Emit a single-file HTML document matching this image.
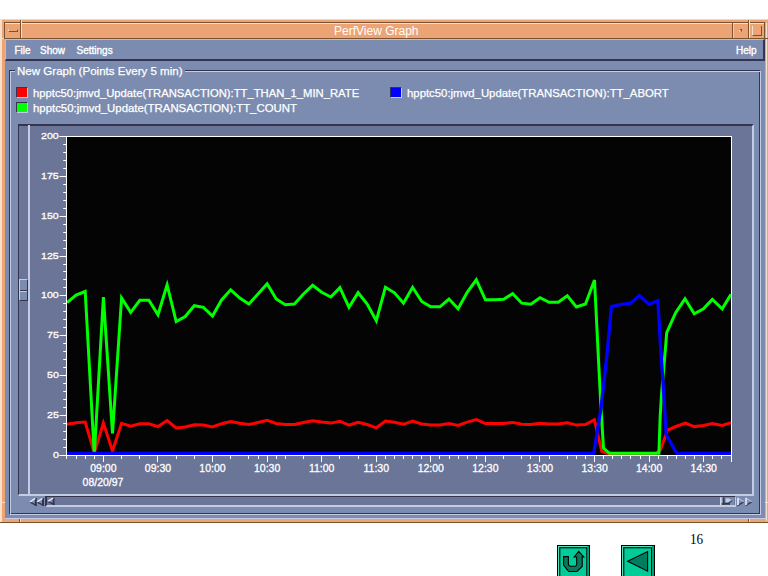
<!DOCTYPE html>
<html><head><meta charset="utf-8"><title>PerfView Graph</title>
<style>
html,body{margin:0;padding:0;background:#fff;}
body{width:768px;height:576px;position:relative;overflow:hidden;font-family:"Liberation Sans",sans-serif;}
.abs{position:absolute;}
#win{left:0;top:19px;width:768px;height:504px;background:#ECA474;}
.lt{background:#F9E0CC;}
.dk{background:#7A5230;}
#client{left:5px;top:39px;width:760px;height:480px;background:#7B8CB0;}
#menubar{left:5px;top:39px;width:760px;height:22px;background:#7B8CB0;box-sizing:border-box;border-top:1px solid #B4C0DC;border-left:1px solid #B4C0DC;border-right:2px solid #34344E;border-bottom:2px solid #34344E;}
.menu{color:#fff;font-size:10px;top:44.6px;line-height:11px;-webkit-text-stroke:0.35px #fff;white-space:nowrap;}
.leg{color:#fff;font-size:11.35px;line-height:12px;white-space:nowrap;-webkit-text-stroke:0.25px #fff;}
.sw{width:10px;height:9px;border-top:1px solid #34344E;border-left:1px solid #34344E;border-bottom:1px solid #C4CCE4;border-right:1px solid #C4CCE4;}
svg text{font-family:"Liberation Sans",sans-serif;}
</style></head><body>
<!-- window frame -->
<div id="win" class="abs"></div>
<div class="abs lt" style="left:0;top:19px;width:768px;height:1px;opacity:.8"></div>
<div class="abs lt" style="left:0;top:19px;width:2px;height:503px"></div>
<div class="abs dk" style="left:0;top:522px;width:768px;height:1px"></div>
<!-- title bar lines -->
<div class="abs dk" style="left:4px;top:22px;width:761px;height:1px"></div>
<div class="abs lt" style="left:5px;top:23px;width:760px;height:1px"></div>
<div class="abs dk" style="left:4px;top:22px;width:1px;height:17px"></div>
<div class="abs dk" style="left:4px;top:38px;width:761px;height:1px"></div>
<div class="abs dk" style="left:20px;top:20px;width:1px;height:19px"></div>
<div class="abs lt" style="left:21px;top:20px;width:1px;height:18px"></div>
<div class="abs dk" style="left:732px;top:23px;width:1px;height:16px"></div>
<div class="abs lt" style="left:733px;top:24px;width:1px;height:14px;opacity:.6"></div>
<div class="abs dk" style="left:748px;top:20px;width:1px;height:19px"></div>
<div class="abs lt" style="left:749px;top:20px;width:1px;height:18px"></div>
<div class="abs dk" style="left:764px;top:23px;width:1px;height:16px"></div>
<div class="abs lt" style="left:765.5px;top:23px;width:1px;height:498px"></div>
<div class="abs lt" style="left:0;top:38px;width:4px;height:1px"></div>
<div class="abs dk" style="left:765px;top:38px;width:3px;height:1px"></div>
<div class="abs lt" style="left:0;top:502px;width:5px;height:1px"></div>
<div class="abs lt" style="left:765px;top:502px;width:3px;height:1px"></div>
<div class="abs lt" style="left:20px;top:519px;width:1px;height:3px"></div>
<div class="abs dk" style="left:19px;top:519px;width:1px;height:3px"></div>
<div class="abs lt" style="left:749px;top:519px;width:1px;height:3px"></div>
<div class="abs dk" style="left:748px;top:519px;width:1px;height:3px"></div>
<!-- window menu button -->
<div class="abs" style="left:8px;top:29px;width:10px;height:3px;box-sizing:border-box;border-left:1px solid #F9E0CC;border-top:1px solid #ECA474;border-right:1px solid #7A5230;border-bottom:1px solid #7A5230"></div>
<!-- minimize dot -->
<div class="abs" style="left:739px;top:29px;width:3px;height:3px;box-sizing:border-box;border-left:1px solid #F9E0CC;border-top:1px solid #7A5230;border-right:1px solid #7A5230;border-bottom:1px solid #ECA474"></div>
<!-- maximize square -->
<div class="abs" style="left:752px;top:26px;width:10px;height:10px;box-sizing:border-box;border-left:1px solid #F9E0CC;border-right:1px solid #7A5230;border-bottom:1px solid #7A5230"></div>
<div class="abs" style="left:334px;top:24.5px;width:84px;text-align:center;color:#fff;font-size:12px;line-height:13px;white-space:nowrap">PerfView Graph</div>
<!-- client -->
<div id="client" class="abs"></div>
<div class="abs" style="left:5px;top:518px;width:761px;height:1px;background:#C4CCE4"></div>
<div id="menubar" class="abs"></div>
<div class="abs menu" style="left:14.5px">File</div>
<div class="abs menu" style="left:40px">Show</div>
<div class="abs menu" style="left:76.5px">Settings</div>
<div class="abs menu" style="left:736px">Help</div>
<!-- frame -->
<div class="abs" style="left:9px;top:70px;width:751px;height:444px;box-sizing:border-box;border:1px solid #34344E;"></div>
<div class="abs" style="left:10px;top:71px;width:751px;height:444px;box-sizing:border-box;border:1px solid #C4CCE4;"></div>
<div class="abs" style="left:11px;top:72px;width:748px;height:441px;background:#7B8CB0"></div>
<div class="abs leg" style="left:15px;top:65px;padding:0 2px;background:#7B8CB0;font-size:11.55px">New Graph (Points Every 5 min)</div>
<!-- legend -->
<div class="abs sw" style="left:16px;top:87px;background:#FF0000"></div>
<div class="abs leg" style="left:33px;top:86.5px;font-size:11.25px">hpptc50:jmvd_Update(TRANSACTION):TT_THAN_1_MIN_RATE</div>
<div class="abs sw" style="left:16px;top:102px;background:#00FF00"></div>
<div class="abs leg" style="left:33px;top:101.5px;font-size:11.4px">hpptc50:jmvd_Update(TRANSACTION):TT_COUNT</div>
<div class="abs sw" style="left:390px;top:87px;background:#0000FF"></div>
<div class="abs leg" style="left:407px;top:86.5px;font-size:11.37px">hpptc50:jmvd_Update(TRANSACTION):TT_ABORT</div>
<!-- sunken graph area -->
<div class="abs" style="left:18px;top:124px;width:736px;height:372px;background:#6A7598;box-sizing:border-box;border-top:2px solid #34344E;border-left:1px solid #34344E;border-right:2px solid #C4CCE4;border-bottom:2px solid #C4CCE4"></div>
<div class="abs" style="left:28px;top:125px;width:2px;height:370px;background:#C4CCE4"></div>
<!-- slider thumb -->
<div class="abs" style="left:19px;top:279px;width:9px;height:22px;background:#7B8CB0;box-sizing:border-box;border-top:1px solid #C4CCE4;border-left:1px solid #C4CCE4;border-right:1px solid #34344E;border-bottom:1px solid #34344E"></div>
<div class="abs" style="left:20px;top:290px;width:7px;height:1px;background:#34344E"></div>
<div class="abs" style="left:20px;top:291px;width:7px;height:1px;background:#C4CCE4"></div>
<!-- horizontal scrollbar -->
<div class="abs" style="left:45px;top:496px;width:691px;height:11px;background:#6A7598;box-sizing:border-box;border-top:1.4px solid #34344E;border-left:2px solid #34344E;border-right:1.6px solid #C4CCE4;border-bottom:2px solid #C4CCE4"></div>
<svg class="abs" style="left:0;top:0" width="768" height="576" viewBox="0 0 768 576">
<!-- scroll arrows -->
<g>
<path d="M30.0 501.8 L36.8 498.0 V505.6 Z" fill="#7B8CB0"/><path d="M30.0 502.1 L36.8 505.6" stroke="#34344E" stroke-width="1.3" fill="none"/><path d="M35.8 498.0 V505.6" stroke="#34344E" stroke-width="2" fill="none"/><path d="M30.0 501.8 L35.3 498.3" stroke="#E4E8F4" stroke-width="1.5" fill="none"/>
<path d="M37.1 501.8 L44.0 498.0 V505.6 Z" fill="#7B8CB0"/><path d="M37.1 502.1 L44.0 505.6" stroke="#34344E" stroke-width="1.3" fill="none"/><path d="M43.0 498.0 V505.6" stroke="#34344E" stroke-width="2" fill="none"/><path d="M37.1 501.8 L42.5 498.3" stroke="#E4E8F4" stroke-width="1.5" fill="none"/>
<path d="M48.0 501.2 L54.6 497.8 V504.7 Z" fill="#7B8CB0"/><path d="M48.0 501.6 L54.6 504.7" stroke="#34344E" stroke-width="1.3" fill="none"/><path d="M53.6 497.8 V504.7" stroke="#34344E" stroke-width="2" fill="none"/><path d="M48.0 501.2 L53.1 498.1" stroke="#E4E8F4" stroke-width="1.5" fill="none"/>
<path d="M743.6 501.7 L737.0 497.8 V505.6 Z" fill="#7B8CB0"/><path d="M743.6 502.0 L737.5 505.6" stroke="#34344E" stroke-width="1.4" fill="none"/><path d="M743.6 501.7 L738.0 498.1" stroke="#C4CCE4" stroke-width="1" fill="none"/><path d="M738.0 497.8 V505.1" stroke="#D4DAEC" stroke-width="2" fill="none"/>
<path d="M751.7 501.7 L745.1 497.8 V505.6 Z" fill="#7B8CB0"/><path d="M751.7 502.0 L745.6 505.6" stroke="#34344E" stroke-width="1.4" fill="none"/><path d="M751.7 501.7 L746.1 498.1" stroke="#C4CCE4" stroke-width="1" fill="none"/><path d="M746.1 497.8 V505.1" stroke="#D4DAEC" stroke-width="2" fill="none"/>
<rect x="720" y="497.3" width="14.2" height="7.7" fill="#7B8CB0"/>
<rect x="720" y="497.3" width="1.6" height="7.7" fill="#D4DAEC"/>
<path d="M725.6 498.4 H729 L731.6 500.3 L728.6 502.4 H725.6 Z" fill="#C4CCE4"/>
<path d="M723.8 497.5 V504.7" stroke="#34344E" stroke-width="1.6" fill="none"/>
<path d="M721.5 504 H730" stroke="#34344E" stroke-width="1.4" fill="none"/>
<path d="M731.8 500.6 L728.3 503.4 H725" stroke="#34344E" stroke-width="1.2" fill="none"/>
</g>
<!-- plot -->
<rect x="67" y="137" width="664" height="318" fill="#040404"/>
<g fill="none" stroke-width="3" stroke-linejoin="miter" stroke-linecap="butt">
<path stroke="#FF0000" d="M67.0 424.2 L76.1 422.7 L85.2 422.0 L94.3 453.0 L103.4 423.1 L112.5 451.0 L121.6 423.3 L130.7 426.1 L139.8 423.7 L148.9 423.7 L158.0 426.6 L167.1 420.6 L176.2 428.0 L185.2 427.0 L194.3 424.8 L203.4 425.1 L212.5 426.9 L221.6 423.7 L230.7 421.6 L239.8 423.3 L248.9 424.5 L258.0 422.5 L267.1 420.4 L276.2 423.5 L285.3 424.6 L294.4 424.5 L303.5 422.5 L312.6 420.7 L321.7 422.1 L330.8 423.1 L339.9 421.2 L349.0 425.1 L358.1 422.2 L367.2 424.5 L376.3 427.8 L385.4 421.1 L394.5 422.2 L403.5 424.3 L412.6 421.1 L421.7 424.0 L430.8 425.0 L439.9 425.0 L449.0 423.5 L458.1 425.4 L467.2 422.1 L476.3 419.6 L485.4 423.6 L494.5 423.6 L503.6 423.5 L512.7 422.4 L521.8 424.3 L530.9 424.5 L540.0 423.2 L549.1 424.1 L558.2 424.1 L567.3 422.8 L576.4 425.1 L585.5 424.5 L594.3 419.7 L601.8 451.5 L608.5 454.0 L655.0 454.0 L660.4 450.0 L667.5 430.2 L676.0 426.5 L685.4 423.2 L694.2 426.6 L703.5 425.4 L712.3 423.5 L722.2 425.4 L731.0 422.6"/>
<path stroke="#00FF00" d="M67.0 302.7 L76.1 295.0 L85.2 291.5 L94.3 455.0 L103.4 297.0 L112.5 433.5 L121.6 298.0 L130.7 312.3 L139.8 300.3 L148.9 300.3 L158.0 314.8 L167.1 284.8 L176.2 321.5 L185.2 316.5 L194.3 305.7 L203.4 307.3 L212.5 316.0 L221.6 300.0 L230.7 289.8 L239.8 298.0 L248.9 304.0 L258.0 294.0 L267.1 283.7 L276.2 299.0 L285.3 304.8 L294.4 304.0 L303.5 294.0 L312.6 285.3 L321.7 292.3 L330.8 297.0 L339.9 287.7 L349.0 307.3 L358.1 292.7 L367.2 304.0 L376.3 320.7 L385.4 287.3 L394.5 292.8 L403.5 303.2 L412.6 287.3 L421.7 301.5 L430.8 306.8 L439.9 306.8 L449.0 299.0 L458.1 308.7 L467.2 292.3 L476.3 279.8 L485.4 299.8 L494.5 299.8 L503.6 299.2 L512.7 293.7 L521.8 303.2 L530.9 304.3 L540.0 297.7 L549.1 302.3 L558.2 302.3 L567.3 295.7 L576.4 307.0 L585.5 304.0 L594.5 280.0 L598.5 360.0 L601.0 408.0 L603.5 448.0 L609.5 453.3 L640.0 453.3 L658.9 453.3 L660.2 416.0 L661.7 392.0 L665.8 344.0 L666.7 332.7 L675.8 312.5 L685.0 298.8 L694.2 313.8 L703.5 308.8 L712.3 299.4 L722.2 308.8 L731.0 294.4"/>
<path stroke="#0000FF" d="M67.0 453.3 L76.1 453.3 L85.2 453.3 L94.3 453.3 L103.4 453.3 L112.5 453.3 L121.6 453.3 L130.7 453.3 L139.8 453.3 L148.9 453.3 L158.0 453.3 L167.1 453.3 L176.2 453.3 L185.2 453.3 L194.3 453.3 L203.4 453.3 L212.5 453.3 L221.6 453.3 L230.7 453.3 L239.8 453.3 L248.9 453.3 L258.0 453.3 L267.1 453.3 L276.2 453.3 L285.3 453.3 L294.4 453.3 L303.5 453.3 L312.6 453.3 L321.7 453.3 L330.8 453.3 L339.9 453.3 L349.0 453.3 L358.1 453.3 L367.2 453.3 L376.3 453.3 L385.4 453.3 L394.5 453.3 L403.5 453.3 L412.6 453.3 L421.7 453.3 L430.8 453.3 L439.9 453.3 L449.0 453.3 L458.1 453.3 L467.2 453.3 L476.3 453.3 L485.4 453.3 L494.5 453.3 L503.6 453.3 L512.7 453.3 L521.8 453.3 L530.9 453.3 L540.0 453.3 L549.1 453.3 L558.2 453.3 L567.3 453.3 L576.4 453.3 L585.5 453.3 L593.7 453.3 L601.0 408.0 L606.4 360.0 L609.3 330.0 L611.4 306.5 L621.5 304.4 L630.9 303.1 L639.4 295.6 L649.1 304.4 L657.9 300.6 L660.4 344.0 L663.6 392.0 L666.2 434.5 L676.7 453.3 L731.0 453.3" stroke-width="3.3"/>
</g>
<g stroke="#fff" stroke-width="1" fill="none">
<path d="M59.5 136.5 H732 M66.5 136 V456 M59.5 455.5 H732 M731.5 136 V462"/>
<line x1="59.5" y1="455.5" x2="66.5" y2="455.5"/>
<line x1="63.2" y1="447.5" x2="66.5" y2="447.5"/>
<line x1="63.2" y1="439.5" x2="66.5" y2="439.5"/>
<line x1="63.2" y1="431.5" x2="66.5" y2="431.5"/>
<line x1="63.2" y1="423.5" x2="66.5" y2="423.5"/>
<line x1="59.5" y1="415.5" x2="66.5" y2="415.5"/>
<line x1="63.2" y1="407.5" x2="66.5" y2="407.5"/>
<line x1="63.2" y1="399.5" x2="66.5" y2="399.5"/>
<line x1="63.2" y1="391.5" x2="66.5" y2="391.5"/>
<line x1="63.2" y1="383.5" x2="66.5" y2="383.5"/>
<line x1="59.5" y1="375.5" x2="66.5" y2="375.5"/>
<line x1="63.2" y1="367.5" x2="66.5" y2="367.5"/>
<line x1="63.2" y1="359.5" x2="66.5" y2="359.5"/>
<line x1="63.2" y1="351.5" x2="66.5" y2="351.5"/>
<line x1="63.2" y1="343.5" x2="66.5" y2="343.5"/>
<line x1="59.5" y1="335.5" x2="66.5" y2="335.5"/>
<line x1="63.2" y1="327.5" x2="66.5" y2="327.5"/>
<line x1="63.2" y1="319.5" x2="66.5" y2="319.5"/>
<line x1="63.2" y1="311.5" x2="66.5" y2="311.5"/>
<line x1="63.2" y1="303.5" x2="66.5" y2="303.5"/>
<line x1="59.5" y1="295.5" x2="66.5" y2="295.5"/>
<line x1="63.2" y1="287.5" x2="66.5" y2="287.5"/>
<line x1="63.2" y1="279.5" x2="66.5" y2="279.5"/>
<line x1="63.2" y1="271.5" x2="66.5" y2="271.5"/>
<line x1="63.2" y1="264.5" x2="66.5" y2="264.5"/>
<line x1="59.5" y1="256.5" x2="66.5" y2="256.5"/>
<line x1="63.2" y1="248.5" x2="66.5" y2="248.5"/>
<line x1="63.2" y1="240.5" x2="66.5" y2="240.5"/>
<line x1="63.2" y1="232.5" x2="66.5" y2="232.5"/>
<line x1="63.2" y1="224.5" x2="66.5" y2="224.5"/>
<line x1="59.5" y1="216.5" x2="66.5" y2="216.5"/>
<line x1="63.2" y1="208.5" x2="66.5" y2="208.5"/>
<line x1="63.2" y1="200.5" x2="66.5" y2="200.5"/>
<line x1="63.2" y1="192.5" x2="66.5" y2="192.5"/>
<line x1="63.2" y1="184.5" x2="66.5" y2="184.5"/>
<line x1="59.5" y1="176.5" x2="66.5" y2="176.5"/>
<line x1="63.2" y1="168.5" x2="66.5" y2="168.5"/>
<line x1="63.2" y1="160.5" x2="66.5" y2="160.5"/>
<line x1="63.2" y1="152.5" x2="66.5" y2="152.5"/>
<line x1="63.2" y1="144.5" x2="66.5" y2="144.5"/>
<line x1="59.5" y1="136.5" x2="66.5" y2="136.5"/>
<line x1="66.5" y1="456" x2="66.5" y2="459.0"/>
<line x1="76.5" y1="456" x2="76.5" y2="459.0"/>
<line x1="85.5" y1="456" x2="85.5" y2="459.0"/>
<line x1="94.5" y1="456" x2="94.5" y2="459.0"/>
<line x1="103.5" y1="456" x2="103.5" y2="462.0"/>
<line x1="121.5" y1="456" x2="121.5" y2="459.0"/>
<line x1="139.5" y1="456" x2="139.5" y2="459.0"/>
<line x1="157.5" y1="456" x2="157.5" y2="462.0"/>
<line x1="176.5" y1="456" x2="176.5" y2="459.0"/>
<line x1="194.5" y1="456" x2="194.5" y2="459.0"/>
<line x1="212.5" y1="456" x2="212.5" y2="462.0"/>
<line x1="230.5" y1="456" x2="230.5" y2="459.0"/>
<line x1="248.5" y1="456" x2="248.5" y2="459.0"/>
<line x1="258.5" y1="456" x2="258.5" y2="459.0"/>
<line x1="267.5" y1="456" x2="267.5" y2="462.0"/>
<line x1="276.5" y1="456" x2="276.5" y2="459.0"/>
<line x1="285.5" y1="456" x2="285.5" y2="459.0"/>
<line x1="303.5" y1="456" x2="303.5" y2="459.0"/>
<line x1="321.5" y1="456" x2="321.5" y2="462.0"/>
<line x1="339.5" y1="456" x2="339.5" y2="459.0"/>
<line x1="358.5" y1="456" x2="358.5" y2="459.0"/>
<line x1="376.5" y1="456" x2="376.5" y2="462.0"/>
<line x1="385.5" y1="456" x2="385.5" y2="459.0"/>
<line x1="394.5" y1="456" x2="394.5" y2="459.0"/>
<line x1="403.5" y1="456" x2="403.5" y2="459.0"/>
<line x1="412.5" y1="456" x2="412.5" y2="459.0"/>
<line x1="421.5" y1="456" x2="421.5" y2="459.0"/>
<line x1="430.5" y1="456" x2="430.5" y2="462.0"/>
<line x1="439.5" y1="456" x2="439.5" y2="459.0"/>
<line x1="449.5" y1="456" x2="449.5" y2="459.0"/>
<line x1="458.5" y1="456" x2="458.5" y2="459.0"/>
<line x1="467.5" y1="456" x2="467.5" y2="459.0"/>
<line x1="476.5" y1="456" x2="476.5" y2="459.0"/>
<line x1="485.5" y1="456" x2="485.5" y2="462.0"/>
<line x1="503.5" y1="456" x2="503.5" y2="459.0"/>
<line x1="521.5" y1="456" x2="521.5" y2="459.0"/>
<line x1="530.5" y1="456" x2="530.5" y2="459.0"/>
<line x1="539.5" y1="456" x2="539.5" y2="462.0"/>
<line x1="549.5" y1="456" x2="549.5" y2="459.0"/>
<line x1="567.5" y1="456" x2="567.5" y2="459.0"/>
<line x1="576.5" y1="456" x2="576.5" y2="459.0"/>
<line x1="585.5" y1="456" x2="585.5" y2="459.0"/>
<line x1="594.5" y1="456" x2="594.5" y2="462.0"/>
<line x1="603.5" y1="456" x2="603.5" y2="459.0"/>
<line x1="612.5" y1="456" x2="612.5" y2="459.0"/>
<line x1="621.5" y1="456" x2="621.5" y2="459.0"/>
<line x1="630.5" y1="456" x2="630.5" y2="459.0"/>
<line x1="640.5" y1="456" x2="640.5" y2="459.0"/>
<line x1="649.5" y1="456" x2="649.5" y2="462.0"/>
<line x1="658.5" y1="456" x2="658.5" y2="459.0"/>
<line x1="667.5" y1="456" x2="667.5" y2="459.0"/>
<line x1="676.5" y1="456" x2="676.5" y2="459.0"/>
<line x1="685.5" y1="456" x2="685.5" y2="459.0"/>
<line x1="694.5" y1="456" x2="694.5" y2="459.0"/>
<line x1="703.5" y1="456" x2="703.5" y2="462.0"/>
<line x1="712.5" y1="456" x2="712.5" y2="459.0"/>
<line x1="721.5" y1="456" x2="721.5" y2="459.0"/>
<line x1="731.5" y1="456" x2="731.5" y2="459.0"/>
</g>
<g fill="#fff" font-size="10.5px" stroke="#fff" stroke-width="0.3">
<text transform="translate(58.8,458.4) scale(1.12,1)" font-size="9.5px" text-anchor="end">0</text>
<text transform="translate(58.8,418.4) scale(1.12,1)" font-size="9.5px" text-anchor="end">25</text>
<text transform="translate(58.8,378.4) scale(1.12,1)" font-size="9.5px" text-anchor="end">50</text>
<text transform="translate(58.8,338.4) scale(1.12,1)" font-size="9.5px" text-anchor="end">75</text>
<text transform="translate(58.8,298.4) scale(1.12,1)" font-size="9.5px" text-anchor="end">100</text>
<text transform="translate(58.8,259.4) scale(1.12,1)" font-size="9.5px" text-anchor="end">125</text>
<text transform="translate(58.8,219.4) scale(1.12,1)" font-size="9.5px" text-anchor="end">150</text>
<text transform="translate(58.8,179.4) scale(1.12,1)" font-size="9.5px" text-anchor="end">175</text>
<text transform="translate(58.8,139.4) scale(1.12,1)" font-size="9.5px" text-anchor="end">200</text>
<text x="103.4" y="472" text-anchor="middle">09:00</text>
<text x="158.0" y="472" text-anchor="middle">09:30</text>
<text x="212.5" y="472" text-anchor="middle">10:00</text>
<text x="267.1" y="472" text-anchor="middle">10:30</text>
<text x="321.7" y="472" text-anchor="middle">11:00</text>
<text x="376.3" y="472" text-anchor="middle">11:30</text>
<text x="430.8" y="472" text-anchor="middle">12:00</text>
<text x="485.4" y="472" text-anchor="middle">12:30</text>
<text x="540.0" y="472" text-anchor="middle">13:00</text>
<text x="594.6" y="472" text-anchor="middle">13:30</text>
<text x="649.1" y="472" text-anchor="middle">14:00</text>
<text x="703.7" y="472" text-anchor="middle">14:30</text>
<text x="103" y="486" text-anchor="middle">08/20/97</text>
</g>
<!-- bottom buttons -->
<g>
<rect x="557" y="545" width="33" height="34" fill="#000"/>
<rect x="558" y="546" width="31" height="32" fill="#4FE3BE"/>
<rect x="587.3" y="546" width="1.7" height="32" fill="#009E78"/>
<rect x="559.2" y="547.2" width="28.1" height="32" fill="#000"/>
<rect x="560.3" y="548.3" width="26" height="30" fill="#00CC99"/>
<path d="M563.6 556.6 H568.4 V564.6 L570 566.3 H575.4 L576.7 565 V557 H574.2 L578.7 551.4 L583.8 557 H582.2 V566.5 L577 571.5 H568.6 L563.6 565 Z" fill="#08795B" stroke="#000" stroke-width="1.1"/>
<rect x="621" y="545" width="34" height="34" fill="#000"/>
<rect x="622" y="546" width="32" height="32" fill="#4FE3BE"/>
<rect x="652" y="546" width="2" height="32" fill="#009E78"/>
<rect x="623.2" y="547.2" width="28.8" height="32" fill="#000"/>
<rect x="624.3" y="548.3" width="26.8" height="30" fill="#00CC99"/>
<path d="M627.6 561.3 L647.6 551.6 V571.2 Z" fill="#007D5E" stroke="#000" stroke-width="1.1"/>
</g>
<text transform="translate(690,544) scale(0.88,1)" font-size="15px" fill="#000" style="font-family:'Liberation Serif',serif">16</text>
</svg>
</body></html>
